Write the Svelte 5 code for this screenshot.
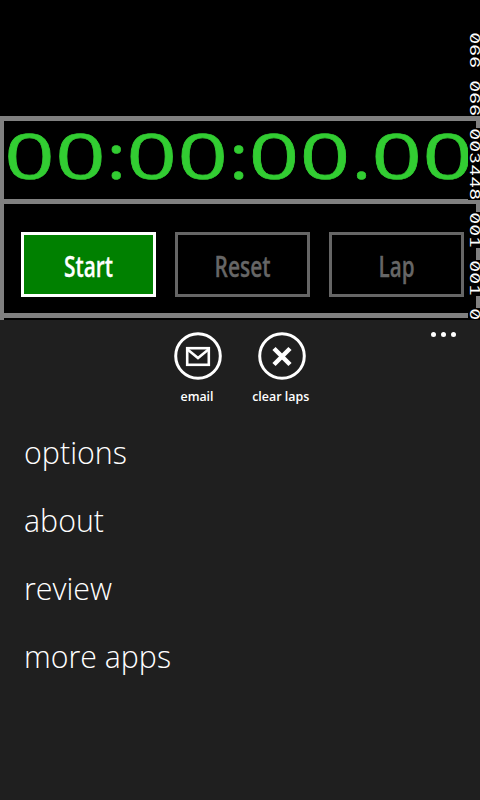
<script>
  const time = [...'00:00:00.00'];
  const timeX = [0.2, 51.2, 102.5, 122.4, 173.4, 225, 244.8, 295.8, 347.8, 367.5, 418.5];
  const buttons = [
    { label: 'Start', width: 49, on: true },
    { label: 'Reset', width: 56 },
    { label: 'Lap', width: 36 }
  ];
  const menu = [
    { label: 'options', width: 103 },
    { label: 'about', width: 80 },
    { label: 'review', width: 88 },
    { label: 'more apps', width: 147 }
  ];
  const counters = [
    { value: '066', top: 33 },
    { value: '066', top: 81 },
    { value: '003448', top: 129 },
    { value: '001', top: 213 },
    { value: '001', top: 261 },
    { value: '0', top: 309 }
  ];
</script>

<div class="phone">
  <main>
    <section class="clock">
      <svg width="472" height="75" role="img" aria-label="Elapsed time">
        {#each time as c, i}
          <text transform="translate({timeX[i]} 58) scale({c === '0' ? 1.4 : 1.18} 1)">{c}</text>
        {/each}
      </svg>
    </section>
    <section class="controls">
      {#each buttons as b}
        <button class:on={b.on}>
          <svg width="129" height="59">
            <text x="64.5" y="41.5" text-anchor="middle" textLength={b.width} lengthAdjust="spacingAndGlyphs">{b.label}</text>
          </svg>
        </button>
      {/each}
    </section>
  </main>

  <footer>
    <div class="actions">
      <div class="action">
        <svg class="icon" width="48" height="48" viewBox="0 0 48 48">
          <circle cx="24" cy="24" r="22.3" />
          <rect x="13.2" y="16.2" width="21.6" height="16.6" />
          <path d="M13 17 L24 26 L35 17" />
        </svg>
        <svg class="label" width="84" height="20"><text x="41" y="13" text-anchor="middle" textLength="33" lengthAdjust="spacingAndGlyphs">email</text></svg>
      </div>
      <div class="action">
        <svg class="icon" width="48" height="48" viewBox="0 0 48 48">
          <circle cx="24" cy="24" r="22.3" />
          <path class="cross" d="M16 16.5 L32 32.5 M32 16.5 L16 32.5" />
        </svg>
        <svg class="label" width="84" height="20"><text x="40.7" y="13" text-anchor="middle" textLength="57" lengthAdjust="spacingAndGlyphs">clear laps</text></svg>
      </div>
    </div>
    <div class="dots"><i></i><i></i><i></i></div>
    <nav>
      {#each menu as m}
        <svg width="300" height="68">
          <text x="24" y="44" textLength={m.width} lengthAdjust="spacingAndGlyphs">{m.label}</text>
        </svg>
      {/each}
    </nav>
  </footer>

  <i class="edge" style="top:121px;height:7px"></i>
  <i class="edge" style="top:203px;height:9px"></i>
  <i class="edge" style="top:248px;height:12px"></i>
  <i class="edge" style="top:296px;height:12px"></i>
  {#each counters as c}
    <svg class="counter" style="top:{c.top - 1}px" width="12" height={c.value.length * 12}>
      <text transform="translate(1.5 0) rotate(90) scale(1.4 1)" x={[...c.value].map((_, i) => (i * 12 + 0.2) / 1.4).join(' ')}>{c.value}</text>
    </svg>
  {/each}
</div>

<style>
  :global(body) { background: #000; }
  .phone {
    position: relative;
    width: 480px;
    height: 800px;
    overflow: hidden;
    background: #000;
    color: #fff;
    font-family: "Open Sans", "Noto Sans", sans-serif;
  }
  svg { display: block; overflow: visible; }
  main { height: 320px; padding-top: 116px; box-sizing: border-box; }
  .clock {
    box-sizing: border-box;
    height: 88px;
    border-top: 5px solid #808080;
    border-bottom: 5px solid #808080;
    border-left: 4px solid #808080;
  }
  .clock text { font-size: 63px; fill: #32cd32; stroke: #32cd32; stroke-width: 0.6; }
  .controls {
    box-sizing: border-box;
    height: 116px;
    padding: 28px 0 0 17px;
    display: flex;
    gap: 19px;
    border-left: 4px solid #808080;
    background: linear-gradient(#808080, #808080) 0 109px / 464px 5px no-repeat;
  }
  button {
    box-sizing: border-box;
    width: 135px;
    height: 65px;
    padding: 0;
    border: 3px solid #666;
    background: #000;
    font-family: inherit;
    flex: none;
  }
  button.on { border-color: #fff; background: #008000; }
  button text { font-size: 28px; font-weight: 600; fill: #666; stroke: #666; stroke-width: 0.3; }
  button.on text { fill: #fff; stroke: #fff; }
  footer { position: relative; height: 480px; background: #1f1f1f; }
  .actions { display: flex; padding: 12px 0 0 156px; }
  .action { width: 84px; }
  .icon { margin-left: 18px; fill: none; stroke: #fff; stroke-width: 3; }
  .icon rect, .icon path { stroke-width: 2.6; }
  .icon .cross { stroke-width: 4.5; }
  .label { margin-top: 8px; }
  .label text { font-size: 13px; font-weight: 600; fill: #fff; }
  .dots { position: absolute; top: 12px; left: 431px; display: flex; gap: 5px; }
  .dots i { width: 5px; height: 5px; border-radius: 50%; background: #fff; }
  nav { padding-top: 12px; }
  nav text { font-size: 31px; font-weight: 300; fill: #fff; }
  .edge { position: absolute; left: 476px; width: 4px; background: #808080; }
  .counter { position: absolute; left: 468px; background: #000; }
  .counter text {
    font-family: Inter, sans-serif;
    font-size: 13.2px;
    font-feature-settings: "zero", "tnum";
    fill: #fff;
  }
</style>
